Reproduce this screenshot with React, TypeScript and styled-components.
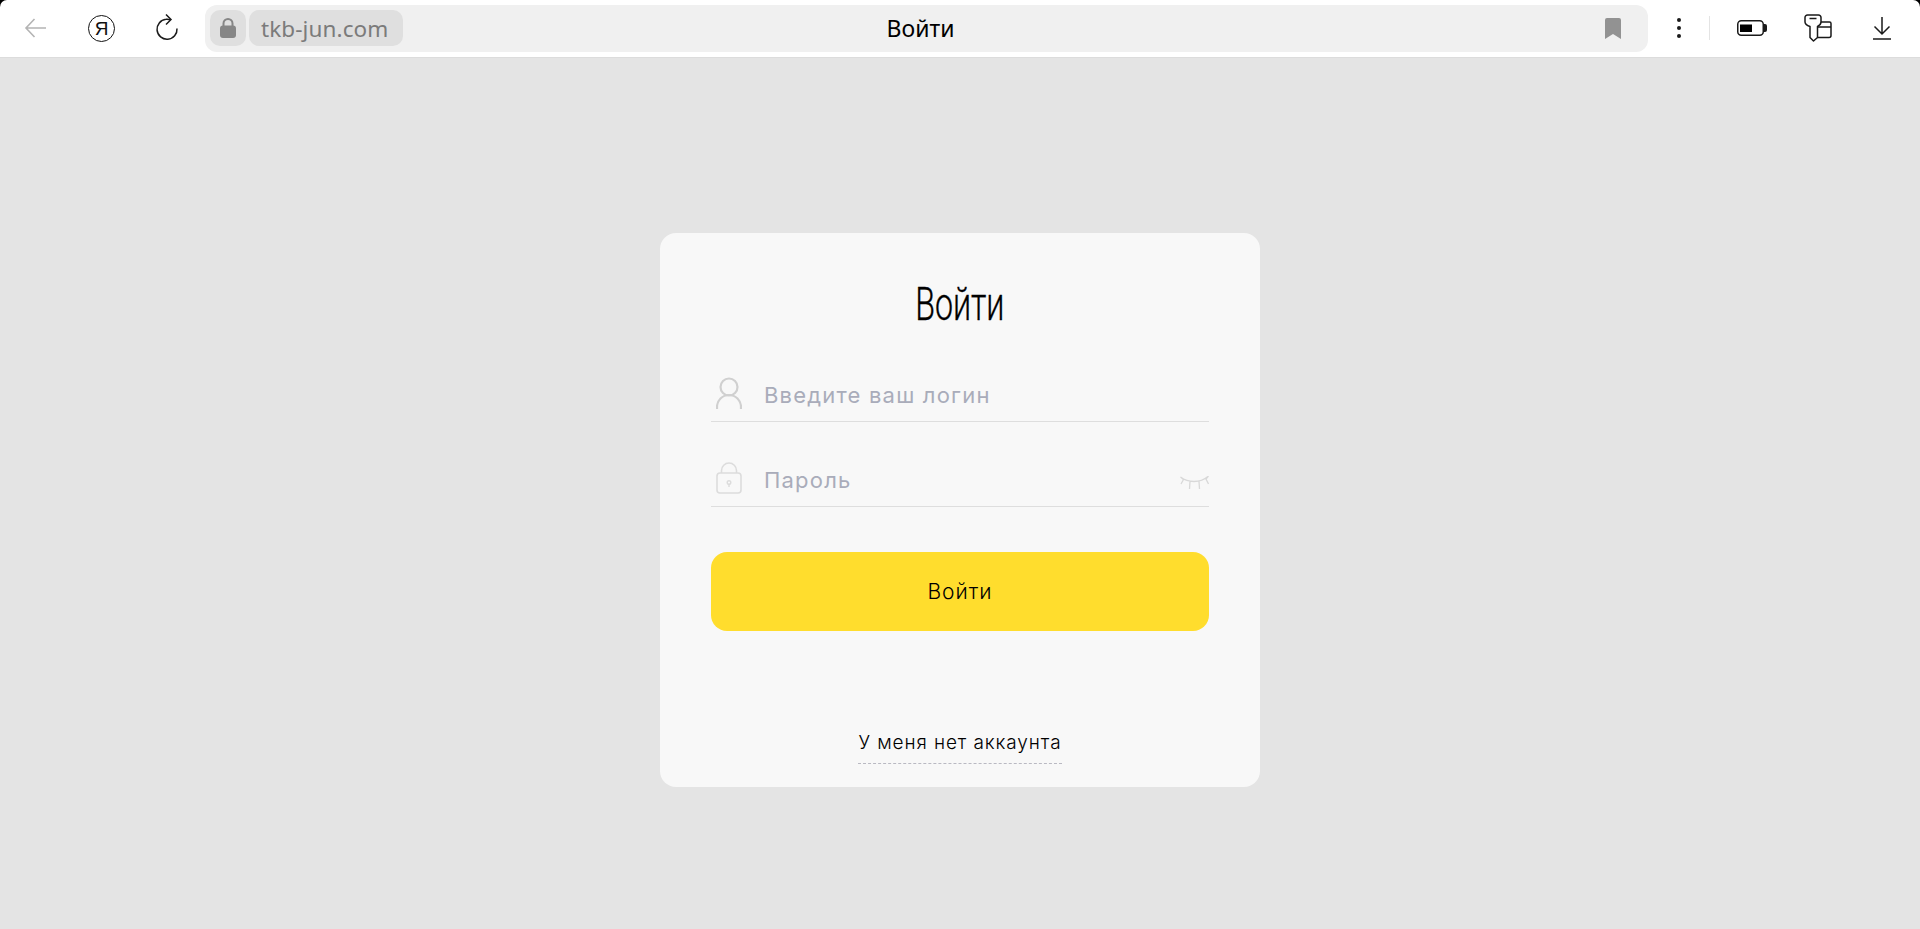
import React from "react";
import styled, { createGlobalStyle } from "styled-components";

const Global = createGlobalStyle`
  html, body { margin: 0; padding: 0; height: 100%; background: #000; }
  #root { height: 100%; }
  * { box-sizing: border-box; }
`;

const Shell = styled.div`
  height: 929px;
  display: flex;
  flex-direction: column;
  overflow: hidden;
  background: #000;
  font-family: Inter, "Noto Sans", sans-serif;
`;

const Toolbar = styled.header`
  height: 58px;
  flex: none;
  display: flex;
  align-items: center;
  background: #fff;
  border-bottom: 1px solid #dcdcdc;
  border-radius: 7px 7px 0 0;
  padding-bottom: 1px;
`;

const NavCluster = styled.div`
  width: 205px;
  flex: none;
  display: flex;
  align-items: center;
  padding-left: 23px;
  gap: 39px;
`;

const IconSlot = styled.span<{ $w?: number; $gap?: number }>`
  width: ${(p) => p.$w ?? 26}px;
  height: 30px;
  margin-left: ${(p) => p.$gap ?? 0}px;
  flex: none;
  display: flex;
  align-items: center;
  justify-content: center;
`;

const YandexBadge = styled.span`
  width: 27px;
  height: 27px;
  flex: none;
  display: flex;
  align-items: center;
  justify-content: center;
  border: 1.4px solid #111;
  border-radius: 50%;
  color: #111;
  font: 400 19px/1 "Liberation Sans", sans-serif;
`;

const AddressBar = styled.div`
  position: relative;
  width: 1443px;
  height: 47px;
  flex: none;
  display: flex;
  align-items: center;
  gap: 3px;
  padding: 0 12px 0 5px;
  border-radius: 12px;
  background: #f0f0f0;
`;

const LockChip = styled.span`
  width: 36px;
  height: 36px;
  display: flex;
  align-items: center;
  justify-content: center;
  border-radius: 10px;
  background: #dfdfdf;
`;

const HostChip = styled.span`
  width: 154px;
  height: 36px;
  padding-left: 12px;
  display: flex;
  align-items: center;
  border-radius: 10px;
  background: #dfdfdf;
  color: #7b7b7b;
  font: 400 22.500px "Noto Sans", sans-serif;
  letter-spacing: 0.1px;
`;

const PageName = styled.span`
  position: absolute;
  left: 0;
  right: 12px;
  top: 0;
  bottom: 0;
  display: flex;
  align-items: center;
  justify-content: center;
  color: #000;
  font: 400 23px "Noto Sans", sans-serif;
  pointer-events: none;
`;

const Bookmark = styled.span`
  margin-left: auto;
  margin-right: 15px;
  display: flex;
`;

const ToolCluster = styled.div`
  flex: 1;
  display: flex;
  align-items: center;
  padding-left: 23px;
`;

const Divider = styled.span`
  width: 1px;
  height: 24px;
  background: #e4e4e4;
  margin: 0 26px 0 22px;
`;

const Stage = styled.main`
  flex: 1;
  background: #e4e4e4;
  padding-top: 175px;
  display: flex;
  justify-content: center;
  align-items: flex-start;
`;

const Card = styled.section`
  width: 600px;
  height: 554px;
  padding: 0 51px;
  border-radius: 16px;
  background: #f8f8f8;
  display: flex;
  flex-direction: column;
`;

const Title = styled.h1`
  margin: 0;
  padding-top: 37px;
  height: 108px;
  text-align: center;
  color: #000;
  font: 300 46px/1.5 Roboto, sans-serif;
  -webkit-text-stroke: 0.35px #000;
  > span {
    display: inline-block;
    transform: scaleX(0.7);
  }
`;

const Field = styled.label`
  height: 65px;
  margin-top: 20px;
  display: flex;
  align-items: flex-end;
  border-bottom: 1.5px solid #dedede;
  padding-bottom: 8px;
  &:first-of-type { margin-top: 0; height: 81px; }
`;

const FieldIcon = styled.span`
  width: 53px;
  height: 32px;
  margin-bottom: 4px;
  flex: none;
  display: flex;
  align-items: center;
  padding-left: 5px;
`;

const Input = styled.input`
  flex: 1;
  min-width: 0;
  height: 36px;
  border: 0;
  outline: 0;
  padding: 0;
  background: transparent;
  font: 400 22px Inter, sans-serif;
  letter-spacing: 1.2px;
  color: #222;
  &::placeholder { color: #a9acba; opacity: 1; }
`;

const EyeSlot = styled.span`
  display: flex;
  margin-bottom: 8px;
`;

const Submit = styled.button`
  width: 100%;
  height: 79px;
  margin-top: 45px;
  flex: none;
  border: 0;
  border-radius: 16px;
  background: #ffdd2d;
  color: #000;
  font: 300 21px Inter, sans-serif;
  letter-spacing: 1px;
`;

const Footer = styled.div`
  margin-top: 98px;
  display: flex;
  justify-content: center;
`;

const SignupLink = styled.a`
  padding-bottom: 7px;
  border-bottom: 1px dashed #b9b9c2;
  color: #000;
  font: 300 19px/27px Inter, sans-serif;
  letter-spacing: 0.9px;
`;

const Back = () => (
  <svg width="26" height="24" viewBox="0 0 26 24" fill="none" stroke="#b4b4b4" strokeWidth="1.6">
    <path d="M23 12H3M11.5 3 3 12l8.500 9" />
  </svg>
);

const Reload = () => (
  <svg width="26" height="28" viewBox="0 0 26 28" fill="none" stroke="#1a1a1a" strokeWidth="1.5">
    <path d="M23 14.500a10 10 0 1 1-11-9.200c1.500-.2 3 0 4.500.6" />
    <path d="M12 .5 17 5.500l-5 5" />
  </svg>
);

const Padlock = () => (
  <svg width="16" height="20" viewBox="0 0 16 20" fill="none">
    <path d="M3.500 9V5.500a4.500 4.500 0 0 1 9 0V9" stroke="#868686" strokeWidth="2" />
    <rect x="0" y="7.500" width="16" height="12.500" rx="3" fill="#868686" />
  </svg>
);

const BookmarkIcon = () => (
  <svg width="16" height="21" viewBox="0 0 16 21">
    <path d="M2 0h12a2 2 0 0 1 2 2v19l-8-5-8 5V2a2 2 0 0 1 2-2z" fill="#929292" />
  </svg>
);

const Dots = () => (
  <svg width="6" height="22" viewBox="0 0 6 22" fill="#1a1a1a">
    <circle cx="3" cy="3" r="2" />
    <circle cx="3" cy="11" r="2" />
    <circle cx="3" cy="19" r="2" />
  </svg>
);

const Battery = () => (
  <svg width="30" height="16" viewBox="0 0 30 16">
    <rect x=".75" y=".75" width="25.500" height="14.500" rx="3.500" fill="none" stroke="#1a1a1a" strokeWidth="1.5" />
    <rect x="3" y="4.500" width="12" height="7.500" fill="#000" />
    <path d="M27 4h1a2 2 0 0 1 2 2v4a2 2 0 0 1-2 2h-1z" fill="#1a1a1a" />
  </svg>
);

const PasswordKeys = () => (
  <svg width="28" height="28" viewBox="0 0 28 28" fill="none" stroke="#1a1a1a" strokeWidth="1.5" strokeLinejoin="round">
    <path d="M3.500 1h11a2.500 2.500 0 0 1 2.500 2.500V8c0 2-1.500 3.500-3.500 4.500v11L9.500 27 6 23.500v-11C3 11.500 1 10 1 8V3.500A2.500 2.500 0 0 1 3.500 1z" />
    <path d="M5.500 4.500h7" />
    <path d="M17 8h8.500A1.500 1.500 0 0 1 27 9.500v12a2 2 0 0 1-2 2H13.500M13.500 13H27" />
  </svg>
);

const Download = () => (
  <svg width="20" height="24" viewBox="0 0 20 24" fill="none" stroke="#1a1a1a" strokeWidth="1.5">
    <path d="M10 1v17M2.500 10.500 10 18l7.500-7.500M1 23h18" />
  </svg>
);

const Person = () => (
  <svg width="26" height="32" viewBox="0 0 26 32" fill="none" stroke="#d0d0d0" strokeWidth="2.200">
    <circle cx="13" cy="10" r="8.500" />
    <path d="M1 32v-2a12 12 0 0 1 24 0v2" />
  </svg>
);

const FieldLock = () => (
  <svg width="26" height="32" viewBox="0 0 26 32" fill="none" stroke="#dcdcdc" strokeWidth="1.6">
    <path d="M5.500 11V8.500a7.500 7.500 0 0 1 15 0V11" />
    <rect x="1" y="11" width="24" height="20" rx="3" />
    <path d="M13 25v-3" strokeWidth="1.4" />
    <circle cx="13" cy="20.500" r="1.800" strokeWidth="1.4" />
  </svg>
);

const ClosedEye = () => (
  <svg width="29" height="14" viewBox="0 0 29 14" fill="none" stroke="#d8d8d8" strokeWidth="1.3">
    <path d="M.5 1c4 3 8 4.500 13.500 4.500S24 4 28.500 0M.5 1l3 2.500L1 8M28.500 0 26 3l2.500 5M10 5.500 9.500 13M19 5.500l.5 7.500" />
  </svg>
);

export default function App() {
  return (
    <Shell>
      <Global />
      <Toolbar>
        <NavCluster>
          <IconSlot><Back /></IconSlot>
          <IconSlot $w={27}><YandexBadge>Я</YandexBadge></IconSlot>
          <IconSlot><Reload /></IconSlot>
        </NavCluster>
        <AddressBar>
          <LockChip><Padlock /></LockChip>
          <HostChip>tkb-jun.com</HostChip>
          <PageName>Войти</PageName>
          <Bookmark><BookmarkIcon /></Bookmark>
        </AddressBar>
        <ToolCluster>
          <IconSlot $w={16}><Dots /></IconSlot>
          <Divider />
          <IconSlot $w={32}><Battery /></IconSlot>
          <IconSlot $w={28} $gap={36}><PasswordKeys /></IconSlot>
          <IconSlot $w={20} $gap={40}><Download /></IconSlot>
        </ToolCluster>
      </Toolbar>
      <Stage>
        <Card>
          <Title><span>Войти</span></Title>
          <Field>
            <FieldIcon><Person /></FieldIcon>
            <Input placeholder="Введите ваш логин" />
          </Field>
          <Field>
            <FieldIcon><FieldLock /></FieldIcon>
            <Input placeholder="Пароль" />
            <EyeSlot><ClosedEye /></EyeSlot>
          </Field>
          <Submit type="button">Войти</Submit>
          <Footer><SignupLink>У меня нет аккаунта</SignupLink></Footer>
        </Card>
      </Stage>
    </Shell>
  );
}
